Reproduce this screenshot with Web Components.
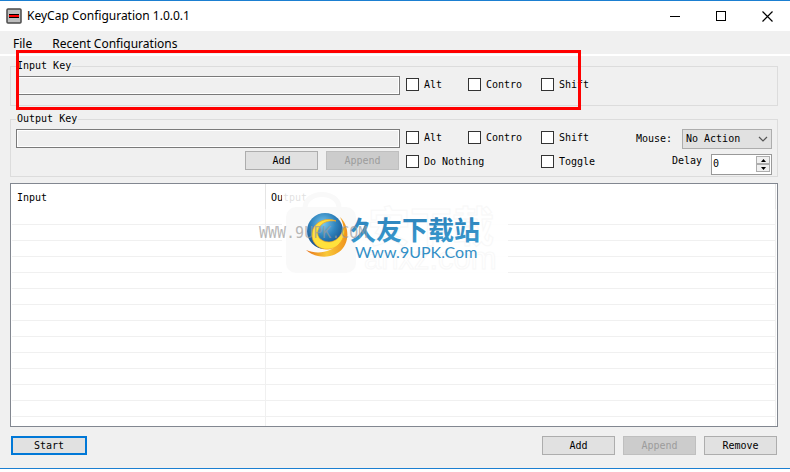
<!DOCTYPE html>
<html lang="en">
<head>
<meta charset="utf-8">
<title>KeyCap Configuration 1.0.0.1</title>
<style>
  body {
    margin: 0;
    background: white;
    color: #000;
    font: 10px/12px "DejaVu Sans Mono", "Noto Sans CJK SC", monospace;
  }
</style>
</head>
<body>
<keycap-window></keycap-window>

<script>
class KeycapTitlebar extends HTMLElement {
  connectedCallback() {
    this.attachShadow({ mode: 'open' });
    this.shadowRoot.innerHTML = `
      <style>
        :host {
          display: flex;
          align-items: center;
          height: 30px;
          padding-left: 6px;
          background: white;
        }
        h1 {
          flex: 1;
          margin: 0 0 0 5px;
          font: 12px/18px "Noto Sans", sans-serif;
        }
        button {
          width: 46px;
          height: 30px;
          padding: 0;
          border: 0;
          background: none;
        }
        svg { display: block; }
        button svg { margin: auto; }
      </style>
      <svg width="16" height="16">
        <rect x="1" y="1" width="14" height="14" rx="1" fill="#bdbdbd" stroke="#4a4a4a" stroke-width="1.5"/>
        <rect x="3" y="6" width="10" height="4" fill="#000"/>
        <rect x="3" y="7" width="10" height="2" fill="#f00"/>
      </svg>
      <h1><slot></slot></h1>
      <button aria-label="Minimize"><svg width="10" height="10"><path d="M0 5.5h10" stroke="#000"/></svg></button>
      <button aria-label="Maximize"><svg width="10" height="10"><rect x=".5" y=".5" width="9" height="9" fill="none" stroke="#000"/></svg></button>
      <button aria-label="Close"><svg width="11" height="11"><path d="M.5.5l10 10M10.5.5l-10 10" stroke="#000" stroke-width="1.2"/></svg></button>
    `;
  }
}
customElements.define('keycap-titlebar', KeycapTitlebar);

class KeycapMenubar extends HTMLElement {
  connectedCallback() {
    this.attachShadow({ mode: 'open' });
    this.shadowRoot.innerHTML = `
      <style>
        :host {
          display: flex;
          gap: 20px;
          height: 23px;
          padding: 0 13px;
          border-bottom: 2px solid white;
        }
        button {
          padding: 2px 0 0;
          border: 0;
          background: none;
          color: inherit;
          font: 12px/18px "Noto Sans", sans-serif;
        }
      </style>
      <button>File</button>
      <button>Recent Configurations</button>
    `;
  }
}
customElements.define('keycap-menubar', KeycapMenubar);

class KeycapGroup extends HTMLElement {
  connectedCallback() {
    this.attachShadow({ mode: 'open' });
    this.shadowRoot.innerHTML = `
      <style>
        :host { display: block; }
        fieldset {
          min-width: 0;
          margin: 0;
          padding: 4px 5px 1px;
          border: 1px solid #dcdcdc;
        }
        legend { padding: 0 1px; }
        div {
          display: grid;
          grid-template-columns: minmax(0, 1fr) 62px 73px 95px 136px;
          grid-auto-rows: minmax(20px, auto);
          row-gap: 2px;
        }
      </style>
      <fieldset>
        <legend>${this.getAttribute('label')}</legend>
        <div><slot></slot></div>
      </fieldset>
    `;
  }
}
customElements.define('keycap-group', KeycapGroup);

class KeycapField extends HTMLElement {
  connectedCallback() {
    this.attachShadow({ mode: 'open' });
    this.shadowRoot.innerHTML = `
      <style>
        :host { display: block; margin-right: 6px; }
        input {
          display: block;
          box-sizing: border-box;
          width: 100%;
          height: 19px;
          padding: 0 3px;
          border: 1px solid #7a7a7a;
          box-shadow: inset 0 0 0 1px white;
          background: #f0f0f0;
          font: inherit;
        }
      </style>
      <input type="text" readonly aria-label="${this.getAttribute('label')}">
    `;
  }
}
customElements.define('keycap-field', KeycapField);

class KeycapCheck extends HTMLElement {
  connectedCallback() {
    this.attachShadow({ mode: 'open' });
    this.shadowRoot.innerHTML = `
      <style>
        :host {
          display: flex;
          align-items: flex-start;
          padding-top: 2px;
          white-space: nowrap;
        }
        label { display: flex; align-items: center; gap: 5px; }
        input {
          appearance: none;
          box-sizing: border-box;
          width: 13px;
          height: 13px;
          margin: 0;
          border: 1px solid #333;
          background: white;
        }
        input:checked { box-shadow: inset 0 0 0 2px white; background: #333; }
      </style>
      <label><input type="checkbox"><slot></slot></label>
    `;
  }
}
customElements.define('keycap-check', KeycapCheck);

class KeycapButton extends HTMLElement {
  connectedCallback() {
    const disabled = this.hasAttribute('disabled') ? 'disabled' : '';
    this.attachShadow({ mode: 'open' });
    this.shadowRoot.innerHTML = `
      <style>
        :host { display: block; }
        button {
          display: block;
          box-sizing: border-box;
          width: 73px;
          height: 19px;
          padding: 0;
          border: 1px solid #adadad;
          background: #e1e1e1;
          color: #000;
          font: inherit;
        }
        button:disabled {
          border-color: #bfbfbf;
          background: #ccc;
          color: #9c9c9c;
        }
        :host([primary]) button { width: 76px; border: 2px solid #0078d7; }
      </style>
      <button ${disabled}><slot></slot></button>
    `;
  }
}
customElements.define('keycap-button', KeycapButton);

class KeycapSelect extends HTMLElement {
  connectedCallback() {
    this.attachShadow({ mode: 'open' });
    this.shadowRoot.innerHTML = `
      <style>
        :host { display: flex; align-items: center; justify-content: space-between; }
        span { position: relative; display: block; }
        select {
          appearance: none;
          display: block;
          width: 90px;
          height: 20px;
          padding: 0 3px;
          border: 1px solid #adadad;
          border-radius: 0;
          background: #e1e1e1;
          color: #000;
          font: inherit;
        }
        svg { position: absolute; right: 4px; top: 7px; pointer-events: none; }
      </style>
      <label for="mouse">Mouse:</label>
      <span>
        <select id="mouse"><option>No Action</option><option>Left Click</option><option>Right Click</option></select>
        <svg width="10" height="7"><path d="M1 1l4 4 4-4" fill="none" stroke="#555" stroke-width="1.2"/></svg>
      </span>
    `;
  }
}
customElements.define('keycap-select', KeycapSelect);

class KeycapSpinner extends HTMLElement {
  connectedCallback() {
    this.attachShadow({ mode: 'open' });
    this.shadowRoot.innerHTML = `
      <style>
        :host { display: flex; justify-content: flex-end; gap: 9px; }
        label { padding-top: 4px; }
        .box {
          display: flex;
          box-sizing: border-box;
          width: 61px;
          height: 21px;
          margin-top: 3px;
          padding: 1px;
          border: 1px solid #999;
          background: white;
        }
        input {
          appearance: textfield;
          flex: 1;
          min-width: 0;
          height: 14px;
          padding: 0;
          border: 0;
          font: inherit;
        }
        input::-webkit-inner-spin-button { display: none; }
        .steps { display: flex; flex-direction: column; }
        button {
          display: flex;
          align-items: center;
          justify-content: center;
          box-sizing: border-box;
          width: 14px;
          height: 8px;
          padding: 0;
          border: 1px solid #adadad;
          background: #f0f0f0;
        }
      </style>
      <label for="delay">Delay</label>
      <div class="box">
        <input id="delay" type="number" min="0" value="0">
        <div class="steps">
          <button aria-label="Increase"><svg width="5" height="3"><path d="M0 3L2.5 0L5 3z"/></svg></button>
          <button aria-label="Decrease"><svg width="5" height="3"><path d="M0 0h5L2.5 3z"/></svg></button>
        </div>
      </div>
    `;
    const input = this.shadowRoot.querySelector('input');
    const [up, down] = this.shadowRoot.querySelectorAll('button');
    up.addEventListener('click', () => input.stepUp());
    down.addEventListener('click', () => input.stepDown());
  }
}
customElements.define('keycap-spinner', KeycapSpinner);

class KeycapList extends HTMLElement {
  connectedCallback() {
    this.attachShadow({ mode: 'open' });
    this.shadowRoot.innerHTML = `
      <style>
        :host {
          position: relative;
          display: block;
          overflow: hidden;
          padding: 0 1px;
          border: 1px solid #828790;
          background: white;
        }
        table {
          width: 100%;
          border-collapse: separate;
          border-spacing: 0;
          table-layout: fixed;
        }
        th {
          height: 25px;
          padding: 2px 5px 0;
          border-right: 1px solid #e5e5e5;
          text-align: left;
          font-weight: normal;
        }
        th, td { box-sizing: border-box; }
        th:first-child { width: 254px; }
        td {
          height: 16px;
          padding: 0;
          border-right: 1px solid #f0f0f0;
          border-bottom: 1px solid #f0f0f0;
        }
      </style>
      <table>
        <thead><tr><th>Input</th><th>Output</th></tr></thead>
        <tbody>${'<tr><td></td><td></td></tr>'.repeat(14)}</tbody>
      </table>
      <slot></slot>
    `;
  }
}
customElements.define('keycap-list', KeycapList);

// Site stamp lying over the list
class SiteWatermark extends HTMLElement {
  connectedCallback() {
    this.attachShadow({ mode: 'open' });
    this.shadowRoot.innerHTML = `
      <style>
        :host {
          position: absolute;
          left: 246px;
          top: 4px;
          pointer-events: none;
        }
        svg { display: block; }
      </style>
      <svg width="252" height="88" viewBox="257 188 252 88">
        <defs>
          <radialGradient id="ball" cx=".45" cy=".3" r=".7">
            <stop offset="0" stop-color="#79c8ee"/>
            <stop offset=".5" stop-color="#2f83bd"/>
            <stop offset="1" stop-color="#124b86"/>
          </radialGradient>
          <linearGradient id="gold" x1="0" y1="0" x2="1" y2="0">
            <stop offset="0" stop-color="#e8711a"/>
            <stop offset=".5" stop-color="#f8c93a"/>
            <stop offset="1" stop-color="#f0921c"/>
          </linearGradient>
          <linearGradient id="ink" x1="0" y1="0" x2="0" y2="1">
            <stop offset="0" stop-color="#2b7fb8"/>
            <stop offset="1" stop-color="#3a9bd0"/>
          </linearGradient>
        </defs>
        <rect x="282" y="188" width="226" height="88" fill="#fff" opacity=".88"/>
        <path d="M305 208c0-18 34-18 34 0" fill="none" stroke="#f9f9f9" stroke-width="5"/>
        <rect x="286" y="207" width="70" height="66" rx="10" fill="#f9f9f9"/>
        <g fill="#fff" stroke="#f8f8f8" stroke-width="1">
          <text x="368" y="242" font-family="Noto Sans CJK SC, sans-serif" font-size="42" font-weight="700">安下载</text>
          <text x="364" y="269" font-family="Liberation Sans, sans-serif" font-size="31">anxz.com</text>
        </g>
        <circle cx="325" cy="231" r="18" fill="url(#ball)"/>
        <path d="M340 217C350 226 350 244 339 252C328 260 314 257 306 250C318 255 332 252 339 243C345 235 345 226 340 217Z" fill="url(#gold)"/>
        <path d="M336 221C324 216 311 224 312 236C313 248 327 253 337 246C343 241 345 234 344 228C341 237 335 242 329 242C320 242 315 235 319 228C322 222 329 220 336 221Z" fill="#ffe13c" stroke="#f4a522" stroke-width=".7"/>
        <text x="350" y="240" fill="url(#ink)" font-family="Noto Sans CJK SC, sans-serif" font-size="26" font-weight="700">久友下载站</text>
        <text x="355" y="258" fill="#338fc6" font-family="Lato, sans-serif" font-size="16">Www.9UPK.Com</text>
        <text x="259" y="238" fill="#999" fill-opacity=".7" font-family="DejaVu Sans Mono, monospace" font-size="15">WWW.9UPK.COM</text>
      </svg>
    `;
  }
}
customElements.define('site-watermark', SiteWatermark);

class KeycapWindow extends HTMLElement {
  connectedCallback() {
    this.attachShadow({ mode: 'open' });
    this.shadowRoot.innerHTML = `
      <style>
        :host {
          display: flex;
          flex-direction: column;
          box-sizing: border-box;
          height: calc(100vh - 3px);
          min-height: 320px;
          border: solid #1b7fd1;
          border-width: 1px 0;
          background: #f0f0f0;
        }
        main {
          position: relative;
          display: flex;
          flex: 1;
          flex-direction: column;
          min-height: 0;
          padding: 4px 12px 13px 10px;
        }
        .input { margin-bottom: 7px; }
        .input keycap-field { margin-bottom: 9px; }
        .buttons { display: flex; gap: 8px; justify-content: flex-end; margin-right: 7px; }
        .wide { grid-column: span 2; }
        keycap-group > .tall { padding-top: 4px; }
        keycap-spinner { height: 24px; }
        keycap-list { flex: 1; min-height: 0; margin-top: 6px; }
        footer { display: flex; gap: 8px; padding: 9px 1px 0; }
        footer keycap-button:first-child { margin-right: auto; }
        .marker {
          position: absolute;
          left: 16px;
          top: -6px;
          box-sizing: border-box;
          width: 565px;
          height: 60px;
          border: 3px solid #f00;
          pointer-events: none;
        }
      </style>
      <keycap-titlebar>KeyCap Configuration 1.0.0.1</keycap-titlebar>
      <keycap-menubar></keycap-menubar>
      <main>
        <keycap-group class="input" label="Input Key">
          <keycap-field label="Input key"></keycap-field>
          <keycap-check>Alt</keycap-check>
          <keycap-check>Contro</keycap-check>
          <keycap-check>Shift</keycap-check>
        </keycap-group>
        <keycap-group label="Output Key">
          <keycap-field label="Output key"></keycap-field>
          <keycap-check>Alt</keycap-check>
          <keycap-check>Contro</keycap-check>
          <keycap-check>Shift</keycap-check>
          <keycap-select></keycap-select>
          <div class="buttons">
            <keycap-button>Add</keycap-button>
            <keycap-button disabled>Append</keycap-button>
          </div>
          <keycap-check class="wide tall">Do Nothing</keycap-check>
          <keycap-check class="tall">Toggle</keycap-check>
          <keycap-spinner></keycap-spinner>
        </keycap-group>
        <keycap-list><site-watermark></site-watermark></keycap-list>
        <footer>
          <keycap-button primary>Start</keycap-button>
          <keycap-button>Add</keycap-button>
          <keycap-button disabled>Append</keycap-button>
          <keycap-button>Remove</keycap-button>
        </footer>
        <div class="marker"></div>
      </main>
    `;
  }
}
customElements.define('keycap-window', KeycapWindow);
</script>
</body>
</html>
